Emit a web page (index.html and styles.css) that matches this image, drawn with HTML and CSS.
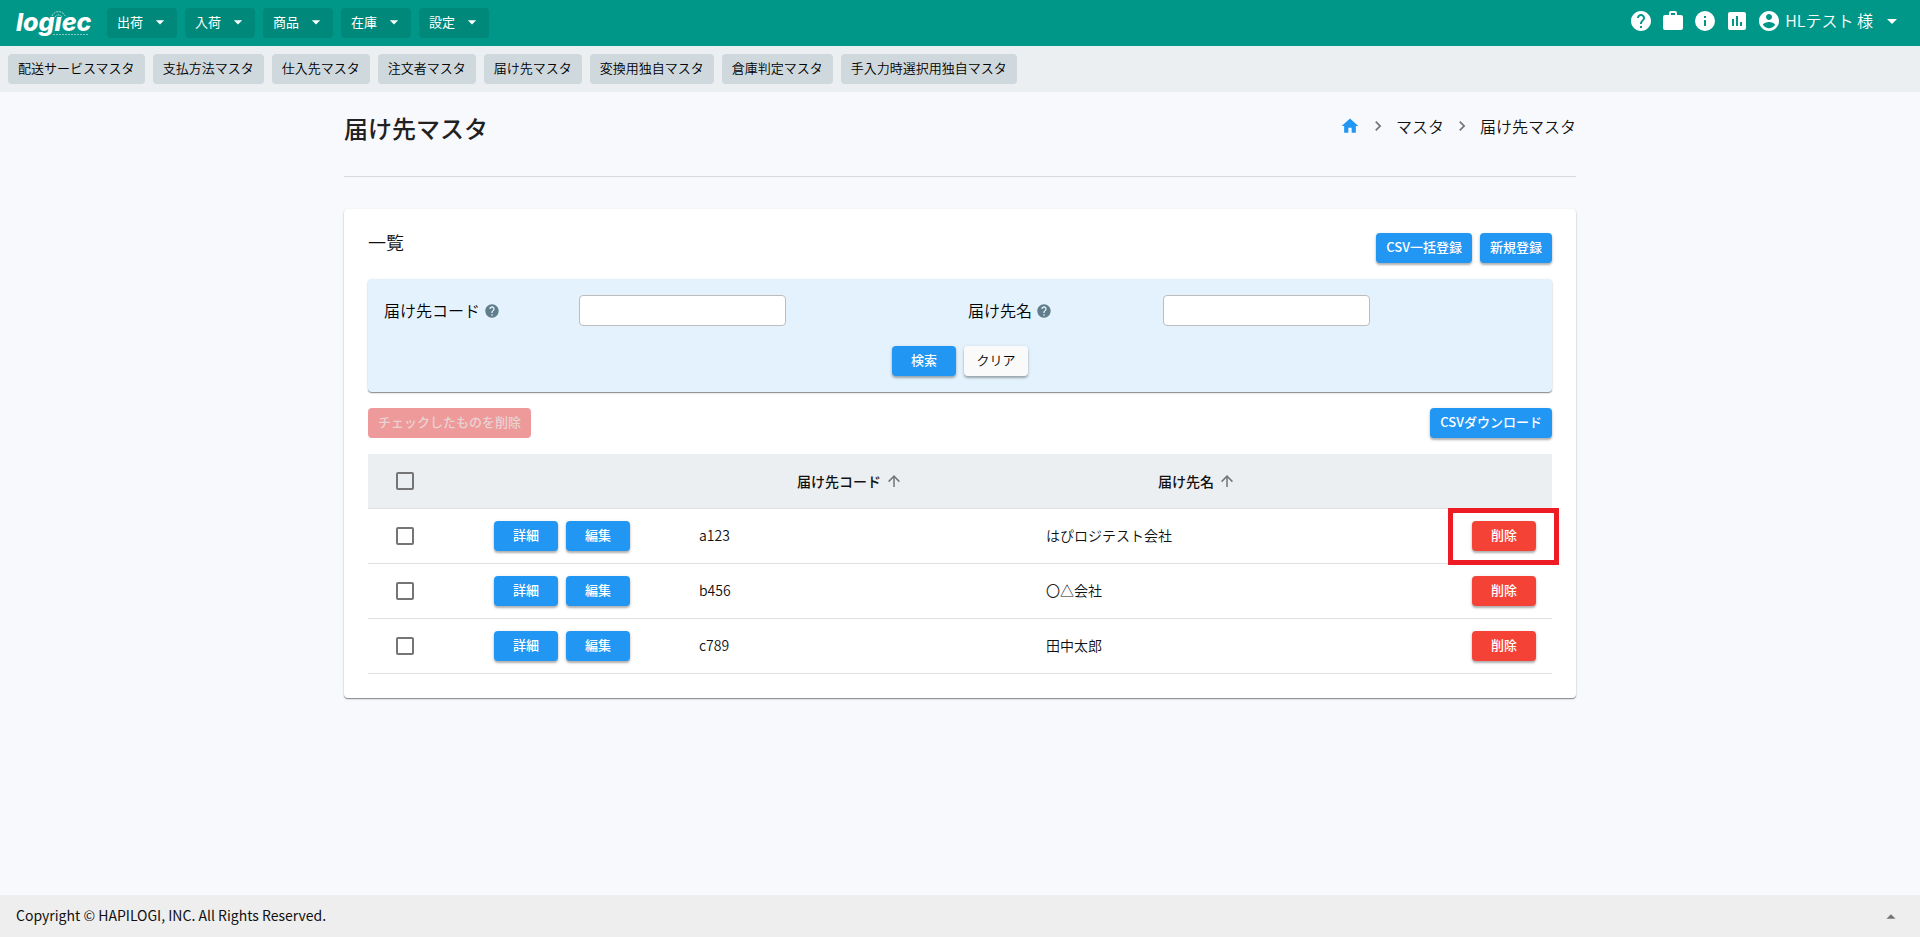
FILE: index.html
```html
<!DOCTYPE html>
<html lang="ja">
<head>
<meta charset="utf-8">
<title>届け先マスタ</title>
<link rel="stylesheet" href="styles.css">
</head>
<body>
<svg class="symbols" aria-hidden="true">
  <symbol id="caret" viewBox="0 0 24 24"><path d="M7 10l5 5 5-5z"/></symbol>
  <symbol id="help" viewBox="0 0 24 24"><path d="M12 2C6.480 2 2 6.480 2 12s4.480 10 10 10 10-4.480 10-10S17.520 2 12 2zm1 17h-2v-2h2v2zm2.070-7.750l-.9.920C13.450 12.900 13 13.500 13 15h-2v-.5c0-1.100.450-2.100 1.170-2.830l1.240-1.260c.370-.360.590-.860.590-1.410 0-1.100-.9-2-2-2s-2 .9-2 2H8c0-2.210 1.790-4 4-4s4 1.790 4 4c0 .880-.360 1.680-.930 2.250z"/></symbol>
  <symbol id="case" viewBox="0 0 24 24"><path d="M10 2h4a2 2 0 0 1 2 2v2h4a2 2 0 0 1 2 2v11a2 2 0 0 1-2 2H4a2 2 0 0 1-2-2V8a2 2 0 0 1 2-2h4V4a2 2 0 0 1 2-2zm4 4V4h-4v2z"/></symbol>
  <symbol id="info" viewBox="0 0 24 24"><path d="M12 2a10 10 0 1 0 0 20 10 10 0 0 0 0-20zm1 15h-2v-6h2zm0-8h-2V7h2z"/></symbol>
  <symbol id="chart" viewBox="0 0 24 24"><path d="M19 3H5a2 2 0 0 0-2 2v14a2 2 0 0 0 2 2h14a2 2 0 0 0 2-2V5a2 2 0 0 0-2-2zM9 17H7v-7h2zm4 0h-2V7h2zm4 0h-2v-4h2z"/></symbol>
  <symbol id="account" viewBox="0 0 24 24"><path d="M12 2C6.480 2 2 6.480 2 12s4.480 10 10 10 10-4.480 10-10S17.520 2 12 2zm0 3c1.660 0 3 1.340 3 3s-1.340 3-3 3-3-1.340-3-3 1.340-3 3-3zm0 14.200c-2.500 0-4.710-1.280-6-3.220.030-1.990 4-3.080 6-3.080s5.970 1.090 6 3.080c-1.290 1.940-3.500 3.220-6 3.220z"/></symbol>
  <symbol id="home" viewBox="0 0 24 24"><path d="M10 20v-6h4v6h5v-8h3L12 3 2 12h3v8z"/></symbol>
  <symbol id="chevron" viewBox="0 0 24 24"><path d="M8.590 16.580L13.170 12 8.590 7.410 10 6l6 6-6 6z"/></symbol>
  <symbol id="arrow" viewBox="0 0 24 24"><path d="M13 20h-2V8l-5.500 5.500-1.420-1.420L12 4.160l7.920 7.920-1.420 1.420L13 8z"/></symbol>
</svg>

<header class="topbar">
  <a class="logo" href="#" aria-label="logiec">
    <svg class="logo-art" viewBox="0 0 76 30">
      <text class="logo-word" x="0" y="23">log&#305;ec</text>
      <path class="logo-arc" d="M36 8a7 7 0 0 1 13 0M39 9a4 4 0 0 1 7 0"/>
      <path class="logo-tag" d="M37 26.500h36"/>
    </svg>
  </a>
  <nav class="menu">
    <button class="menu-btn" type="button">出荷<svg class="icon-sm"><use href="#caret"/></svg></button>
    <button class="menu-btn" type="button">入荷<svg class="icon-sm"><use href="#caret"/></svg></button>
    <button class="menu-btn" type="button">商品<svg class="icon-sm"><use href="#caret"/></svg></button>
    <button class="menu-btn" type="button">在庫<svg class="icon-sm"><use href="#caret"/></svg></button>
    <button class="menu-btn" type="button">設定<svg class="icon-sm"><use href="#caret"/></svg></button>
  </nav>
  <div class="tools">
    <a href="#" aria-label="ヘルプ"><svg class="icon"><use href="#help"/></svg></a>
    <a href="#" aria-label="業務"><svg class="icon"><use href="#case"/></svg></a>
    <a href="#" aria-label="情報"><svg class="icon"><use href="#info"/></svg></a>
    <a href="#" aria-label="統計"><svg class="icon"><use href="#chart"/></svg></a>
    <button class="user" type="button"><svg class="icon"><use href="#account"/></svg><span class="user-name">HLテスト 様</span><svg class="icon"><use href="#caret"/></svg></button>
  </div>
</header>

<nav class="subbar">
  <a class="sub-btn" href="#">配送サービスマスタ</a>
  <a class="sub-btn" href="#">支払方法マスタ</a>
  <a class="sub-btn" href="#">仕入先マスタ</a>
  <a class="sub-btn" href="#">注文者マスタ</a>
  <a class="sub-btn" href="#">届け先マスタ</a>
  <a class="sub-btn" href="#">変換用独自マスタ</a>
  <a class="sub-btn" href="#">倉庫判定マスタ</a>
  <a class="sub-btn" href="#">手入力時選択用独自マスタ</a>
</nav>

<main class="page">
  <div class="page-head">
    <h1 class="title">届け先マスタ</h1>
    <nav class="crumbs">
      <a class="crumb-home" href="#" aria-label="ホーム"><svg class="icon-sm"><use href="#home"/></svg></a>
      <svg class="icon-sm crumb-sep"><use href="#chevron"/></svg>
      <span>マスタ</span>
      <svg class="icon-sm crumb-sep"><use href="#chevron"/></svg>
      <span>届け先マスタ</span>
    </nav>
  </div>

  <section class="card">
    <div class="card-head">
      <h2 class="card-title">一覧</h2>
      <div class="actions">
        <button class="btn primary" type="button">CSV一括登録</button>
        <button class="btn primary" type="button">新規登録</button>
      </div>
    </div>

    <form class="search">
      <div class="fields">
        <div class="field">
          <label class="label" for="code"><span class="label-text">届け先コード</span><svg class="icon-help"><use href="#help"/></svg></label>
          <input class="input" id="code" type="text">
        </div>
        <div class="field">
          <label class="label" for="name"><span class="label-text">届け先名</span><svg class="icon-help"><use href="#help"/></svg></label>
          <input class="input" id="name" type="text">
        </div>
      </div>
      <div class="search-actions">
        <button class="btn primary" type="button">検索</button>
        <button class="btn plain" type="reset">クリア</button>
      </div>
    </form>

    <div class="list-actions">
      <button class="btn disabled" type="button" disabled>チェックしたものを削除</button>
      <button class="btn primary" type="button">CSVダウンロード</button>
    </div>

    <table class="table">
      <colgroup><col class="col-check"><col class="col-ops"><col class="col-data"><col class="col-data"><col class="col-del"></colgroup>
      <thead>
        <tr>
          <th><input class="check" type="checkbox" aria-label="すべて選択"></th>
          <th></th>
          <th class="sort"><span class="sort-label">届け先コード<svg class="icon-arrow"><use href="#arrow"/></svg></span></th>
          <th class="sort"><span class="sort-label">届け先名<svg class="icon-arrow"><use href="#arrow"/></svg></span></th>
          <th></th>
        </tr>
      </thead>
      <tbody>
        <tr>
          <td><input class="check" type="checkbox" aria-label="a123を選択"></td>
          <td class="ops-cell"><div class="ops"><button class="btn primary" type="button">詳細</button><button class="btn primary" type="button">編集</button></div></td>
          <td class="text">a123</td>
          <td class="text">はぴロジテスト会社</td>
          <td class="del"><span class="marked"><button class="btn danger" type="button">削除</button></span></td>
        </tr>
        <tr>
          <td><input class="check" type="checkbox" aria-label="b456を選択"></td>
          <td class="ops-cell"><div class="ops"><button class="btn primary" type="button">詳細</button><button class="btn primary" type="button">編集</button></div></td>
          <td class="text">b456</td>
          <td class="text">〇△会社</td>
          <td class="del"><button class="btn danger" type="button">削除</button></td>
        </tr>
        <tr>
          <td><input class="check" type="checkbox" aria-label="c789を選択"></td>
          <td class="ops-cell"><div class="ops"><button class="btn primary" type="button">詳細</button><button class="btn primary" type="button">編集</button></div></td>
          <td class="text">c789</td>
          <td class="text">田中太郎</td>
          <td class="del"><button class="btn danger" type="button">削除</button></td>
        </tr>
      </tbody>
    </table>
  </section>
</main>

<footer class="footer">
  <span class="copyright">Copyright © HAPILOGI, INC. All Rights Reserved.</span>
  <button class="up" type="button" aria-label="開く"><svg class="icon-up" viewBox="0 0 24 24"><path d="M7 15l5-5 5 5z"/></svg></button>
</footer>
</body>
</html>
```
FILE: styles.css
```css
* { box-sizing: border-box; }

body {
  margin: 0;
  min-height: 100vh;
  display: flex;
  flex-direction: column;
  background: #f8f9fd;
  color: #111;
  font-family: "Noto Sans CJK JP", sans-serif;
  font-size: 14px;
  font-weight: 350;
  line-height: 20px;
}

button, input { font: inherit; color: inherit; }
button { border: 0; background: none; padding: 0; cursor: pointer; }
a { color: inherit; text-decoration: none; }
svg { display: block; flex: none; fill: currentColor; }

.symbols { display: none; }
.icon { width: 24px; height: 24px; }
.icon-sm { width: 20px; height: 20px; }

/* Top bar */
.topbar {
  display: flex;
  align-items: center;
  height: 46px;
  padding: 0 16px;
  background: #009688;
  color: #fff;
}
.logo-art { width: 76px; height: 30px; overflow: visible; }
.logo-word { font: italic 800 25px Inter, sans-serif; fill: #fff; }
.logo-arc { fill: none; stroke: #b2dfdb; stroke-width: 1; stroke-dasharray: 2 1; }
.logo-tag { fill: none; stroke: #80cbc4; stroke-width: 1; stroke-dasharray: 2 1; }
.menu { display: flex; gap: 8px; margin-left: 15px; }
.menu-btn {
  display: flex;
  align-items: center;
  justify-content: space-between;
  width: 70px;
  height: 30px;
  padding: 0 7px 2px 10px;
  border-radius: 4px;
  background: #00897b;
  font-size: 13px;
  font-weight: 400;
}
.tools { display: flex; align-items: center; gap: 8px; margin-left: auto; padding-bottom: 4px; }
.user { display: flex; align-items: center; font-size: 16px; }
.user-name { padding: 0 7px 2px 4px; }

/* Master links */
.subbar {
  display: flex;
  gap: 8px;
  padding: 8px;
  background: #eceff1;
}
.sub-btn {
  height: 30px;
  padding: 0 10px;
  border-radius: 4px;
  background: #cfd8dc;
  color: #000;
  font-size: 13px;
  line-height: 28px;
}

/* Page */
.page {
  flex: 1;
  width: 100%;
  max-width: 1280px;
  margin: 0 auto;
  padding: 20px 24px;
}
.page-head {
  display: flex;
  justify-content: space-between;
  padding-bottom: 32px;
  border-bottom: 1px solid #d8dadf;
}
.title { margin: 0; color: #212121; font-size: 24px; font-weight: 500; line-height: 32px; }
.crumbs { display: flex; align-items: center; height: 28px; font-size: 16px; }
.crumb-home { color: #2196f3; }
.crumb-sep { margin: 0 8px; color: #757575; }

.card {
  margin-top: 32px;
  padding: 24px;
  border-radius: 4px;
  background: #fff;
  box-shadow: 0 1px 1px rgba(0, 0, 0, .4), 0 1px 3px rgba(0, 0, 0, .12);
}
.card-head { display: flex; justify-content: space-between; height: 46px; }
.card-title { margin: 0; font-size: 18px; font-weight: 350; line-height: 18px; }
.actions { display: flex; gap: 8px; }

.btn {
  height: 30px;
  min-width: 64px;
  padding: 0 10px 2px;
  border-radius: 4px;
  font-size: 13px;
  font-weight: 500;
  line-height: 28px;
  box-shadow: 0 2px 2px rgba(0, 0, 0, .25), 0 1px 4px rgba(0, 0, 0, .12);
}
.primary { background: #2196f3; color: #fff; }
.danger { background: #f44336; color: #fff; }
.plain { background: #fafafa; color: #000; font-weight: 350; }
.disabled { background: #ef9a9a; color: #e8d3d3; box-shadow: none; cursor: default; }

.search {
  padding: 16px 0 16px 16px;
  border-radius: 4px;
  background: #e3f2fd;
  box-shadow: 0 1px 1px rgba(0, 0, 0, .4), 0 1px 3px rgba(0, 0, 0, .12);
}
.fields { display: grid; grid-template-columns: 1fr 1fr; }
.field { display: grid; grid-template-columns: 1fr 2fr; align-items: center; }
.label { display: flex; align-items: center; gap: 4px; color: #000; font-size: 16px; }
.label-text { padding-bottom: 2px; }
.icon-help { width: 16px; height: 16px; color: #607d8b; }
.input {
  width: 207px;
  height: 31px;
  padding: 0 8px;
  border: 1px solid #bdbdbd;
  border-radius: 4px;
  background: #fff;
}
.search-actions { display: flex; justify-content: center; gap: 8px; margin-top: 20px; padding-right: 16px; }

.list-actions { display: flex; justify-content: space-between; margin: 16px 0; }

/* Table */
.table { width: 100%; table-layout: fixed; border-collapse: separate; border-spacing: 0; }
.col-check { width: 74px; }
.col-ops { width: 241px; }
.col-del { width: 175px; }
th, td {
  height: 55px;
  padding: 0 16px;
  border-bottom: 1px solid #e0e0e0;
  text-align: left;
}
th { background: #eceff1; }
td:first-child, th:first-child { padding: 0 0 0 28px; }
.sort { padding-right: 29px; font-weight: 500; }
.sort-label { display: flex; align-items: center; justify-content: center; gap: 4px; }
.icon-arrow { width: 18px; height: 18px; color: #757575; }
.check {
  appearance: none;
  display: block;
  width: 18px;
  height: 18px;
  margin: 0;
  border: 2px solid #757575;
  border-radius: 2px;
}
.text { padding-bottom: 2px; }
.ops-cell { padding-left: 52px; }
.ops { display: flex; gap: 8px; }
.del { text-align: right; }
.marked { position: relative; display: inline-block; }
.marked::after {
  content: "";
  position: absolute;
  inset: -13px -23px -14px -24px;
  border: 5px solid #ed1c24;
  pointer-events: none;
}

/* Footer */
.footer {
  display: flex;
  align-items: center;
  justify-content: space-between;
  height: 42px;
  padding: 0 16px;
  background: #eee;
}
.copyright { padding-bottom: 2px; font-weight: 400; }
.up { padding: 0 2px; }
.icon-up { width: 22px; height: 22px; color: #757575; }
```
